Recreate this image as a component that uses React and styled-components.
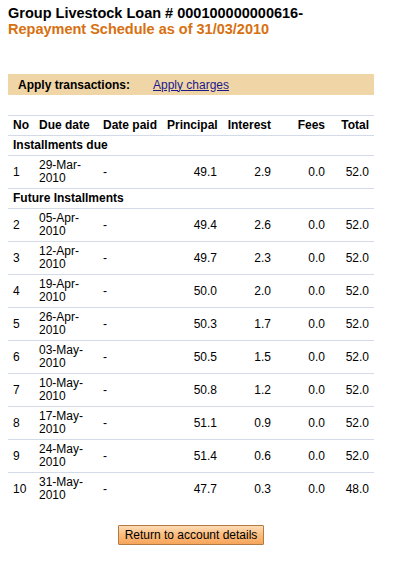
import React from "react";
import styled, { createGlobalStyle } from "styled-components";

const Global = createGlobalStyle`
  html, body { margin: 0; padding: 0; background: #fff; }
  body { font-family: "Liberation Sans", Arial, Helvetica, sans-serif; color: #000; }
`;

const Page = styled.div`
  width: 366px;
  padding: 5px 8px 0 8px;
`;

const Title = styled.h1`
  margin: 0;
  font-size: 14.5px;
  line-height: 16px;
  font-weight: bold;
  color: ${(p) => p.$color || "#000"};
  white-space: nowrap;
`;

const ApplyBar = styled.div`
  margin-top: 37px;
  height: 21px;
  background: #f0d6a6;
  display: flex;
  align-items: center;
  font-size: 12px;
  padding-left: 10px;
`;

const ApplyLabel = styled.span`
  font-weight: bold;
  width: 135px;
`;

const ApplyLink = styled.a`
  color: #1b1a8a;
  text-decoration: underline;
  cursor: pointer;
`;

const Table = styled.table`
  margin-top: 20px;
  width: 366px;
  border-collapse: collapse;
  font-size: 12px;
  line-height: 13px;
  table-layout: fixed;
`;

const Th = styled.th`
  text-align: ${(p) => (p.$right ? "right" : "left")};
  padding: 3px 5px 3px 5px;
  font-weight: bold;
  white-space: nowrap;
  border-top: 1px solid #d3dbe8;
  border-bottom: 1px solid #d3dbe8;
`;

const SectionCell = styled.td`
  font-weight: bold;
  padding: 3px 5px 3px 5px;
  border-bottom: 1px solid #d3dbe8;
`;

const Td = styled.td`
  text-align: ${(p) => (p.$right ? "right" : "left")};
  padding: 3px 5px 3px 5px;
  vertical-align: middle;
  border-bottom: ${(p) => (p.$last ? "none" : "1px solid #d3dbe8")};
`;

const ButtonRow = styled.div`
  display: flex;
  justify-content: center;
  margin-top: 20px;
`;

const Button = styled.button`
  font-family: "Liberation Sans", Arial, Helvetica, sans-serif;
  font-size: 12px;
  height: 20px;
  padding: 0 6px;
  border: 1px solid #b27a45;
  border-radius: 1px;
  background: linear-gradient(to bottom, #fedcb6 0%, #fbbf83 45%, #f7a55a 100%);
  color: #000;
  cursor: pointer;
`;

const columns = [
  { key: "no", label: "No", width: 26 },
  { key: "due", label: "Due date", width: 64 },
  { key: "paid", label: "Date paid", width: 64 },
  { key: "principal", label: "Principal", width: 60, right: true },
  { key: "interest", label: "Interest", width: 54, right: true },
  { key: "fees", label: "Fees", width: 54, right: true },
  { key: "total", label: "Total", width: 44, right: true },
];

const due = [["1", "29-Mar-2010", "49.1", "2.9", "0.0", "52.0"]];
const future = [
  ["2", "05-Apr-2010", "49.4", "2.6", "0.0", "52.0"],
  ["3", "12-Apr-2010", "49.7", "2.3", "0.0", "52.0"],
  ["4", "19-Apr-2010", "50.0", "2.0", "0.0", "52.0"],
  ["5", "26-Apr-2010", "50.3", "1.7", "0.0", "52.0"],
  ["6", "03-May-2010", "50.5", "1.5", "0.0", "52.0"],
  ["7", "10-May-2010", "50.8", "1.2", "0.0", "52.0"],
  ["8", "17-May-2010", "51.1", "0.9", "0.0", "52.0"],
  ["9", "24-May-2010", "51.4", "0.6", "0.0", "52.0"],
  ["10", "31-May-2010", "47.7", "0.3", "0.0", "48.0"],
];

function Row({ r, last }) {
  const [no, date, p, i, f, t] = r;
  const parts = date.split("-");
  return (
    <tr>
      <Td $last={last}>{no}</Td>
      <Td $last={last}>
        {parts[0]}-{parts[1]}-
        <br />
        {parts[2]}
      </Td>
      <Td $last={last}>-</Td>
      <Td $last={last} $right>{p}</Td>
      <Td $last={last} $right>{i}</Td>
      <Td $last={last} $right>{f}</Td>
      <Td $last={last} $right>{t}</Td>
    </tr>
  );
}

export default function App() {
  return (
    <>
      <Global />
      <Page>
        <Title>Group Livestock Loan # 000100000000616-</Title>
        <Title $color="#d7700f">Repayment Schedule as of 31/03/2010</Title>
        <ApplyBar>
          <ApplyLabel>Apply transactions:</ApplyLabel>
          <ApplyLink>Apply charges</ApplyLink>
        </ApplyBar>
        <Table>
          <colgroup>
            {columns.map((c) => (
              <col key={c.key} style={{ width: c.width }} />
            ))}
          </colgroup>
          <thead>
            <tr>
              {columns.map((c) => (
                <Th key={c.key} $right={c.right}>
                  {c.label}
                </Th>
              ))}
            </tr>
          </thead>
          <tbody>
            <tr>
              <SectionCell colSpan={7}>Installments due</SectionCell>
            </tr>
            {due.map((r) => (
              <Row key={r[0]} r={r} />
            ))}
            <tr>
              <SectionCell colSpan={7}>Future Installments</SectionCell>
            </tr>
            {future.map((r, idx) => (
              <Row key={r[0]} r={r} last={idx === future.length - 1} />
            ))}
          </tbody>
        </Table>
        <ButtonRow>
          <Button>Return to account details</Button>
        </ButtonRow>
      </Page>
    </>
  );
}
